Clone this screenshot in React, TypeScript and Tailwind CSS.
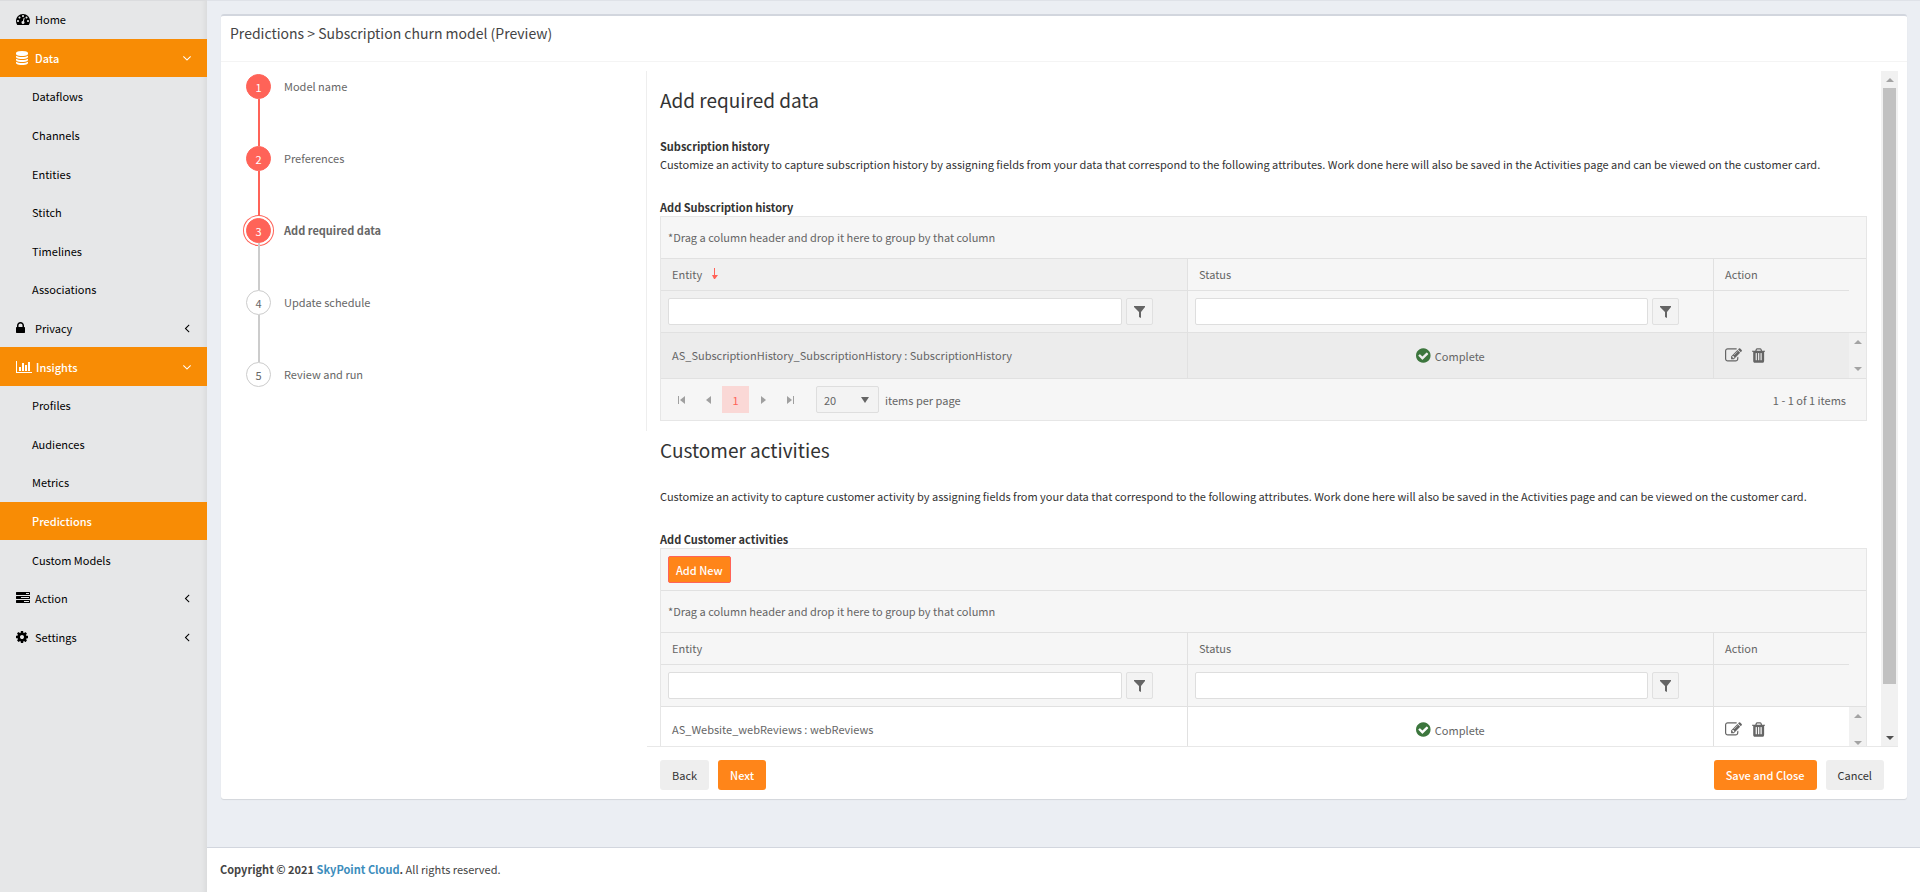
import React, { useState } from 'react';

const ICONS = {
  dashboard: {
    box: '0 0 1792 1792',
    d: 'M384 1152q0-53-37.5-90.5t-90.5-37.5-90.5 37.5-37.5 90.5 37.5 90.5 90.5 37.5 90.5-37.5 37.5-90.5zm192-448q0-53-37.5-90.5t-90.5-37.5-90.5 37.5-37.5 90.5 37.5 90.5 90.5 37.5 90.5-37.5 37.5-90.5zm428 481l101-382q6-26-7.5-48.5t-38.5-29.5-48 6.5-30 39.5l-101 382q-60 5-107 43.5t-63 98.5q-20 77 20 146t117 89 146-20 89-117q16-60-6-117t-72-91zm660-33q0-53-37.5-90.5t-90.5-37.5-90.5 37.5-37.5 90.5 37.5 90.5 90.5 37.5 90.5-37.5 37.5-90.5zm-640-640q0-53-37.5-90.5t-90.5-37.5-90.5 37.5-37.5 90.5 37.5 90.5 90.5 37.5 90.5-37.5 37.5-90.5zm448 192q0-53-37.5-90.5t-90.5-37.5-90.5 37.5-37.5 90.5 37.5 90.5 90.5 37.5 90.5-37.5 37.5-90.5zm320 448q0 261-141 483-19 29-54 29h-1402q-35 0-54-29-141-221-141-483 0-182 71-348t191-286 286-191 348-71 348 71 286 191 191 286 71 348z',
  },
  database: {
    box: '128 0 1536 1792',
    d: 'M896 768q237 0 443-43t325-127v170q0 69-103 128t-280 93.5-385 34.5-385-34.5-280-93.5-103-128v-170q119 84 325 127t443 43zm0 768q237 0 443-43t325-127v170q0 69-103 128t-280 93.5-385 34.5-385-34.5-280-93.5-103-128v-170q119 84 325 127t443 43zm0-384q237 0 443-43t325-127v170q0 69-103 128t-280 93.5-385 34.5-385-34.5-280-93.5-103-128v-170q119 84 325 127t443 43zm0-1152q208 0 385 34.5t280 93.5 103 128v128q0 69-103 128t-280 93.5-385 34.5-385-34.5-280-93.5-103-128v-128q0-69 103-128t280-93.5 385-34.5z',
  },
  lock: {
    box: '320 0 1152 1792',
    d: 'M640 768h512v-192q0-106-75-181t-181-75-181 75-75 181v192zm832 96v576q0 40-28 68t-68 28h-960q-40 0-68-28t-28-68v-576q0-40 28-68t68-28h32v-192q0-184 132-316t316-132 316 132 132 316v192h32q40 0 68 28t28 68z',
  },
  chart: {
    box: '0 0 2048 1792',
    d: 'M640 896v512h-256v-512h256zm384-512v1024h-256v-1024h256zm1024 1152v128h-2048v-1536h128v1408h1920zm-640-896v768h-256v-768h256zm384-384v1152h-256v-1152h256z',
  },
  tasks: {
    box: '0 0 1792 1792',
    d: 'M1024 1408h640v-128h-640v128zm-384-512h1024v-128h-1024v128zm640-512h384v-128h-384v128zm512 832v256q0 26-19 45t-45 19h-1664q-26 0-45-19t-19-45v-256q0-26 19-45t45-19h1664q26 0 45 19t19 45zm0-512v256q0 26-19 45t-45 19h-1664q-26 0-45-19t-19-45v-256q0-26 19-45t45-19h1664q26 0 45 19t19 45zm0-512v256q0 26-19 45t-45 19h-1664q-26 0-45-19t-19-45v-256q0-26 19-45t45-19h1664q26 0 45 19t19 45z',
  },
  cog: {
    box: '128 0 1536 1792',
    d: 'M1152 896q0-106-75-181t-181-75-181 75-75 181 75 181 181 75 181-75 75-181zm512-109v222q0 12-8 23t-20 13l-185 28q-19 54-39 91 35 50 107 138 10 12 10 25t-9 23q-27 37-99 108t-94 71q-12 0-26-9l-138-108q-44 23-91 38-16 136-29 186-7 28-36 28h-222q-14 0-24.5-8.5t-11.5-21.5l-28-184q-49-16-90-37l-141 107q-10 9-25 9-14 0-25-11-126-114-165-168-7-10-7-23 0-12 8-23 15-21 51-66.5t54-70.5q-27-50-41-99l-183-27q-13-2-21-12.5t-8-23.5v-222q0-12 8-23t19-13l186-28q14-46 39-92-40-57-107-138-10-12-10-24 0-10 9-23 26-36 98.5-107.5t94.5-71.5q13 0 26 10l138 107q44-23 91-38 16-136 29-186 7-28 36-28h222q14 0 24.5 8.5t11.5 21.5l28 184q49 16 90 37l142-107q9-9 24-9 13 0 25 10 129 119 165 170 7 8 7 22 0 12-8 23-15 21-51 66.5t-54 70.5q26 50 41 98l183 28q13 2 21 12.5t8 23.5z',
  },
  angleLeft: {
    box: '0 0 1792 1792',
    d: 'M1203 544q0 13-10 23l-393 393 393 393q10 10 10 23t-10 23l-50 50q-10 10-23 10t-23-10l-466-466q-10-10-10-23t10-23l466-466q10-10 23-10t23 10l50 50q10 10 10 23z',
  },
  angleDown: {
    box: '0 0 1792 1792',
    d: 'M1395 736q0 13-10 23l-466 466q-10 10-23 10t-23-10l-466-466q-10-10-10-23t10-23l50-50q10-10 23-10t23 10l393 393 393-393q10-10 23-10t23 10l50 50q10 10 10 23z',
  },
  edit: {
    box: '0 0 1792 1792',
    d: 'M888 1184l116-116-152-152-116 116v56h96v96h56zm440-720q-16-16-33 1l-350 350q-17 17-1 33t33-1l350-350q17-17 1-33zm80 594v190q0 119-84.5 203.5t-203.5 84.5h-832q-119 0-203.5-84.5t-84.5-203.5v-832q0-119 84.5-203.5t203.5-84.5h832q63 0 117 25 15 7 18 23 3 17-9 29l-49 49q-14 14-32 8-23-6-45-6h-832q-66 0-113 47t-47 113v832q0 66 47 113t113 47h832q66 0 113-47t47-113v-126q0-13 9-22l64-64q15-15 35-7t20 29zm-96-738l288 288-672 672h-288v-288zm444 132l-92 92-288-288 92-92q28-28 68-28t68 28l152 152q28 28 28 68t-28 68z',
  },
  trash: {
    box: '192 0 1408 1792',
    d: 'M704 1376v-704q0-14-9-23t-23-9h-64q-14 0-23 9t-9 23v704q0 14 9 23t23 9h64q14 0 23-9t9-23zm256 0v-704q0-14-9-23t-23-9h-64q-14 0-23 9t-9 23v704q0 14 9 23t23 9h64q14 0 23-9t9-23zm256 0v-704q0-14-9-23t-23-9h-64q-14 0-23 9t-9 23v704q0 14 9 23t23 9h64q14 0 23-9t9-23zm-544-992h448l-48-117q-7-9-17-11h-317q-10 2-17 11zm928 32v64q0 14-9 23t-23 9h-96v948q0 83-47 143.5t-113 60.5h-832q-66 0-113-58.5t-47-141.5v-952h-96q-14 0-23-9t-9-23v-64q0-14 9-23t23-9h309l70-167q15-37 54-63t79-26h320q40 0 79 26t54 63l70 167h309q14 0 23 9t9 23z',
  },
  check: {
    box: '128 0 1536 1792',
    d: 'M1412 734q0-28-18-46l-91-90q-19-19-45-19t-45 19l-408 407-226-226q-19-19-45-19t-45 19l-91 90q-18 18-18 46 0 27 18 45l362 362q19 19 45 19 27 0 46-19l543-543q18-18 18-45zm252 162q0 209-103 385.5t-279.5 279.5-385.5 103-385.5-103-279.5-279.5-103-385.5 103-385.5 279.5-279.5 385.5-103 385.5 103 279.5 279.5 103 385.5z',
  },
  filter: { box: '0 0 12 12', d: 'M0 0h11v1L7 6v6L5 11V6L0 1z' },
  sortDown: { box: '0 0 6 11', d: 'M2 0h1v7h3l-3 4h-1l-2-4h2z' },
  first: { box: '0 0 8 8', d: 'M0 0h1v8h-1zM7 0v8L2 4z' },
  prev: { box: '0 0 8 8', d: 'M6 0v8L1 4z' },
  next: { box: '0 0 8 8', d: 'M2 0v8l5-4z' },
  last: { box: '0 0 8 8', d: 'M7 0h1v8h-1zM1 0v8l5-4z' },
  up: { box: '0 0 8 4', d: 'M4 0l4 4H0z' },
  down: { box: '0 0 8 4', d: 'M0 0h8L4 4z' },
};

type IconName = keyof typeof ICONS;

const Icon = ({ name, className }: { name: IconName; className?: string }) => (
  <svg viewBox={ICONS[name].box} className={`shrink-0 ${className}`} fill="currentColor" aria-hidden="true">
    <path d={ICONS[name].d} />
  </svg>
);

interface NavItem {
  text: string;
  icon?: IconName;
  arrow?: 'angleLeft' | 'angleDown';
  active?: boolean;
}

const NAV: NavItem[] = [
  { text: 'Home', icon: 'dashboard' },
  { text: 'Data', icon: 'database', arrow: 'angleDown', active: true },
  { text: 'Dataflows' },
  { text: 'Channels' },
  { text: 'Entities' },
  { text: 'Stitch' },
  { text: 'Timelines' },
  { text: 'Associations' },
  { text: 'Privacy', icon: 'lock', arrow: 'angleLeft' },
  { text: 'Insights', icon: 'chart', arrow: 'angleDown', active: true },
  { text: 'Profiles' },
  { text: 'Audiences' },
  { text: 'Metrics' },
  { text: 'Predictions', active: true },
  { text: 'Custom Models' },
  { text: 'Action', icon: 'tasks', arrow: 'angleLeft' },
  { text: 'Settings', icon: 'cog', arrow: 'angleLeft' },
];

const Sidebar = () => (
  <nav className="w-[207px] shrink-0 bg-[#e6e7e8] shadow-[inset_0_1px_0_#dbdcde,inset_-6px_0_6px_-5px_rgba(0,0,0,0.08)]">
    <ul className="grid auto-rows-fr h-[656px]">
      {NAV.map((item) => (
        <li key={item.text}>
          <a
            href="#"
            className={`flex items-center h-full pr-[13px] ${item.icon ? 'pl-4' : 'pl-8'} ${item.active ? 'bg-[#f88c05] text-white font-medium' : 'text-black'}`}
          >
            {item.icon && (
              <span className="flex min-w-[19px] pr-1">
                <Icon name={item.icon} className="h-[14px]" />
              </span>
            )}
            <span>{item.text}</span>
            {item.arrow && <Icon name={item.arrow} className="h-[14px] ml-auto" />}
          </a>
        </li>
      ))}
    </ul>
  </nav>
);

const STEPS = ['Model name', 'Preferences', 'Add required data', 'Update schedule', 'Review and run'];

const Stepper = ({ current }: { current: number }) => (
  <ol className="w-1/4 shrink-0 self-start pl-[13px] border-r border-[#eeeeee] text-[#666666]">
    {STEPS.map((step, i) => (
      <li key={step} className="flex gap-[10px] h-[72px]">
        <div className="flex flex-col items-center w-[31px] pt-[3px]">
          <span
            className={`flex items-center justify-center size-[25px] shrink-0 rounded-full border ${i <= current ? 'bg-[#ff6358] border-[#ff6358] text-white' : 'bg-white border-[#cccccc]'} ${i === current ? 'shadow-[0_0_0_2px_#ffffff,0_0_0_3px_#ff6358]' : ''}`}
          >
            {i + 1}
          </span>
          {i < STEPS.length - 1 && (
            <span className={`w-[2px] grow -mb-[3px] ${i < current ? 'bg-[#ff6358]' : 'bg-[#cccccc]'}`} />
          )}
        </div>
        <span className={`leading-[30px] ${i === current ? 'font-bold' : ''}`}>{step}</span>
      </li>
    ))}
  </ol>
);

const FilterCell = ({ label }: { label: string }) => (
  <div className="flex gap-1 pl-[7px] pr-[34px]">
    <input
      type="text"
      aria-label={`${label} filter`}
      className="grow min-w-0 h-[27px] px-2 bg-white border border-[#dedede] rounded-xs"
    />
    <button
      type="button"
      aria-label={`${label} filter options`}
      className="flex items-center justify-center size-[27px] border border-[#e0e0e0] rounded-xs bg-[#f3f3f3]"
    >
      <Icon name="filter" className="size-3" />
    </button>
  </div>
);

const Pager = () => {
  const [pageSize, setPageSize] = useState('20');
  const arrow = 'flex justify-center w-[27px] text-[#a0a0a0]';

  return (
    <div className="flex items-center h-[41px] pl-[7px] pr-5">
      <button type="button" aria-label="First page" className={arrow}><Icon name="first" className="size-2" /></button>
      <button type="button" aria-label="Previous page" className={arrow}><Icon name="prev" className="size-2" /></button>
      <button type="button" className="size-[27px] bg-[#fad8d6] text-[#ff6358]">1</button>
      <button type="button" aria-label="Next page" className={arrow}><Icon name="next" className="size-2" /></button>
      <button type="button" aria-label="Last page" className={arrow}><Icon name="last" className="size-2" /></button>
      <label className="flex items-center gap-[6px] ml-[13px]">
        <span className="relative flex items-center">
          <select
            value={pageSize}
            onChange={(e) => setPageSize(e.target.value)}
            className="appearance-none w-[63px] h-[27px] pl-[7px] bg-[#f3f3f3] border border-[#dedede] rounded-xs"
          >
            <option>20</option>
            <option>50</option>
            <option>100</option>
          </select>
          <svg viewBox="0 0 8 6" className="absolute right-[10px] w-2 pointer-events-none" fill="currentColor" aria-hidden="true">
            <path d="M0 0h8L4 6z" />
          </svg>
        </span>
        items per page
      </label>
      <span className="ml-auto">1 - 1 of 1 items</span>
    </div>
  );
};

interface GridProps {
  name: string;
  entity: string;
  sorted?: boolean;
  selected?: boolean;
  toolbar?: boolean;
  paged?: boolean;
}

const Grid: React.FC<GridProps> = ({ name, entity, sorted, selected, toolbar, paged }) => {
  const line = 'border-[#e1e1e1]';
  const sortBg = sorted ? 'bg-[#f0f0f0]' : '';

  return (
    <div className="border border-[#e6e6e6] bg-[#f6f6f6] text-[#656565]">
      {toolbar && (
        <div className={`flex items-center h-[42px] px-[7px] border-b ${line}`}>
          <button type="button" className="h-[27px] px-[7px] bg-[#ff8519] border border-[#ff6358] rounded-xs text-white font-medium">
            Add New
          </button>
        </div>
      )}
      <div className={`flex items-center h-[42px] px-[7px] pb-[2px] border-b ${line}`}>
        *Drag a column header and drop it here to group by that column
      </div>
      <div className="flex">
        <div className="grow min-w-0">
          <table className="w-full table-fixed border-separate border-spacing-0 text-left" aria-label={name}>
            <colgroup>
              <col />
              <col />
              <col className="w-[136px]" />
            </colgroup>
            <thead>
              <tr className="h-8">
                <th className={`px-[11px] pb-[2px] font-normal border-b ${line} ${sortBg}`}>
                  <span className="flex items-center gap-[10px]">
                    Entity {sorted && <Icon name="sortDown" className="h-[11px] text-[#ff6358]" />}
                  </span>
                </th>
                <th className={`px-[11px] pb-[2px] font-normal border-b border-l ${line}`}>Status</th>
                <th className={`px-[11px] pb-[2px] font-normal border-b border-l ${line}`}>Action</th>
              </tr>
              <tr className="h-[42px]">
                <td className={`border-b ${line} ${sortBg}`}><FilterCell label="Entity" /></td>
                <td className={`border-b border-l ${line}`}><FilterCell label="Status" /></td>
                <td className={`border-b border-l ${line}`} />
              </tr>
            </thead>
            <tbody>
              <tr className={`h-[46px] ${selected ? 'bg-[#ececec]' : 'bg-white'}`}>
                <td className={`px-[11px] pb-[2px] border-b ${line}`}>{entity}</td>
                <td className={`border-b border-l ${line}`}>
                  <span className="flex items-center justify-center gap-1">
                    <Icon name="check" className="h-[17px] text-[#3c763d]" />
                    Complete
                  </span>
                </td>
                <td className={`px-[11px] border-b border-l ${line}`}>
                  <span className="flex items-center gap-[10px]">
                    <button type="button" aria-label="Edit"><Icon name="edit" className="h-[17px]" /></button>
                    <button type="button" aria-label="Delete"><Icon name="trash" className="h-[17px]" /></button>
                  </span>
                </td>
              </tr>
            </tbody>
          </table>
        </div>
        <div className="flex flex-col shrink-0 w-[17px]">
          <div className={`h-[74px] border-b ${line}`} />
          <div className={`flex flex-col grow items-center justify-between py-[7px] border-b bg-[#f1f1f1] text-[#a3a3a3] ${line}`}>
            <Icon name="up" className="w-2" />
            <Icon name="down" className="w-2" />
          </div>
        </div>
      </div>
      {paged && <Pager />}
    </div>
  );
};

const Scrollbar = () => (
  <div className="flex flex-col items-center w-[17px] shrink-0 bg-[#f1f1f1]">
    <span className="flex items-center h-[17px] text-[#a3a3a3]"><Icon name="up" className="w-2" /></span>
    <div className="grow w-[13px]">
      <div className="h-[93%] bg-[#c1c1c1]" />
    </div>
    <span className="flex items-center h-[17px] text-[#505050]"><Icon name="down" className="w-2" /></span>
  </div>
);

const App = () => {
  return (
    <div className="flex min-h-screen bg-[#ebeef3] font-['Noto_Sans_CJK_SC','Noto_Sans',sans-serif] text-[11px] leading-[18px] text-[#333333]">
      <Sidebar />
      <div className="flex flex-col grow min-w-0 border-t border-[#dfe2e8]">
        <main className="flex flex-col px-[13px] pt-[13px]">
          <section className="ml-px bg-white rounded-[3px] border-t-2 border-[#d2d6de] shadow-[0_1px_1px_rgba(0,0,0,0.1)]">
            <header className="h-[46px] px-[9px] pt-[7px] border-b border-[#f4f4f4]">
              <h1 className="text-[14px] leading-5 text-[#444444]">Predictions &gt; Subscription churn model (Preview)</h1>
            </header>
            <div className="flex px-[9px] pt-[9px]">
              <Stepper current={2} />
              <div className="grow min-w-0">
                <div className="flex h-[calc(100vh-217px)] overflow-hidden">
                  <div className="grow min-w-0 pl-[13px] pr-[14px] pt-[15px]">
                    <h2 className="text-[19px] leading-7 mb-[23px]">Add required data</h2>
                    <h3 className="font-bold">Subscription history</h3>
                    <p className="mb-[25px]">
                      Customize an activity to capture subscription history by assigning fields from your data that correspond to the following attributes. Work done here will also be saved in the Activities page and can be viewed on the customer card.
                    </p>
                    <h3 className="font-bold">Add Subscription history</h3>
                    <Grid name="Subscription history" entity="AS_SubscriptionHistory_SubscriptionHistory : SubscriptionHistory" sorted selected paged />
                    <h2 className="text-[19px] leading-7 mt-[15px] mb-[23px]">Customer activities</h2>
                    <p className="mb-[25px]">
                      Customize an activity to capture customer activity by assigning fields from your data that correspond to the following attributes. Work done here will also be saved in the Activities page and can be viewed on the customer card.
                    </p>
                    <h3 className="font-bold">Add Customer activities</h3>
                    <Grid name="Customer activities" entity="AS_Website_webReviews : webReviews" toolbar />
                  </div>
                  <Scrollbar />
                </div>
                <div className="flex gap-[9px] pl-[13px] pr-[14px] pt-[13px] pb-[9px] border-t border-[#e8e8e8]">
                  <button type="button" className="h-[30px] px-3 rounded-[3px] bg-[#eeeeee]">Back</button>
                  <button type="button" className="h-[30px] px-3 rounded-[3px] bg-[#ff8519] text-white font-medium">Next</button>
                  <button type="button" className="h-[30px] px-3 rounded-[3px] bg-[#ff8519] text-white font-medium ml-auto">Save and Close</button>
                  <button type="button" className="h-[30px] px-3 rounded-[3px] bg-[#eeeeee]">Cancel</button>
                </div>
              </div>
            </div>
          </section>
        </main>
        <footer className="mt-auto h-[45px] px-[13px] pt-3 bg-white border-t border-[#d2d6de] text-[#444444]">
          <strong>Copyright © 2021 <a href="#" className="text-[#3c8dbc]">SkyPoint Cloud</a>.</strong> All rights reserved.
        </footer>
      </div>
    </div>
  );
};

export default App;
